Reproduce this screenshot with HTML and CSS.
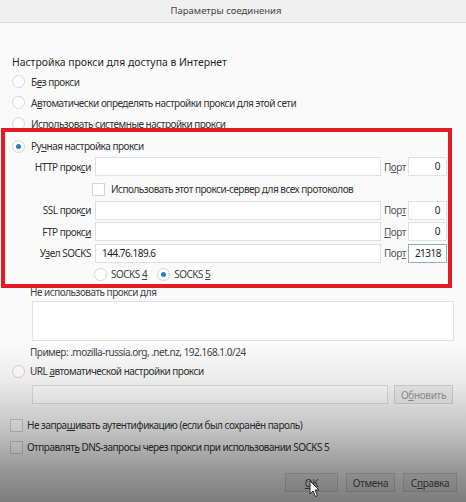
FILE: index.html
```html
<!DOCTYPE html>
<html lang="ru">
<head>
<meta charset="utf-8">
<link rel="stylesheet" href="styles.css">
</head>
<body>
<div class="dialog">
  <div class="titlebar">Параметры соединения</div>
  <div class="content">
    <div class="heading">Настройка прокси для доступа в Интернет</div>
    <label class="opt"><span class="radio"></span><span>Б<u>е</u>з прокси</span></label>
    <label class="opt"><span class="radio"></span><span>А<u>в</u>томатически определять настройки прокси для этой сети</span></label>
    <label class="opt"><span class="radio"></span><span>Испол<u>ь</u>зовать системные настройки прокси</span></label>
    <label class="opt manual"><span class="radio on"></span><span>Ру<u>ч</u>ная настройка прокси</span></label>

    <div class="proxy">
      <div class="prow">
        <span class="plabel">HTTP прок<u>с</u>и</span>
        <span class="field"></span>
        <span class="portlabel">П<u>о</u>рт</span>
        <span class="port">0</span>
      </div>
      <div class="crow">
        <span class="check"></span>
        <span>Использовать этот прокси-сервер для всех протоколов</span>
      </div>
      <div class="prow">
        <span class="plabel">SSL прок<u>с</u>и</span>
        <span class="field"></span>
        <span class="portlabel">Пор<u>т</u></span>
        <span class="port">0</span>
      </div>
      <div class="prow">
        <span class="plabel">FTP прокс<u>и</u></span>
        <span class="field"></span>
        <span class="portlabel"><u>П</u>орт</span>
        <span class="port">0</span>
      </div>
      <div class="prow">
        <span class="plabel">У<u>з</u>ел SOCKS</span>
        <span class="field">144.76.189.6</span>
        <span class="portlabel">Пор<u>т</u></span>
        <span class="port focus">21318</span>
      </div>
      <div class="srow">
        <label class="sopt"><span class="radio"></span><span>SOCKS <u>4</u></span></label>
        <label class="sopt"><span class="radio on"></span><span>SOCKS <u>5</u></span></label>
      </div>
    </div>

    <div class="noproxy">Не использовать прокси для</div>
    <div class="textarea"></div>
    <div class="example">Пример: .mozilla-russia.org, .net.nz, 192.168.1.0/24</div>
    <label class="opt url"><span class="radio"></span><span>URL <u>а</u>втоматической настройки прокси</span></label>
    <div class="urlrow">
      <span class="urlfield"></span>
      <span class="btn small">О<u>б</u>новить</span>
    </div>
    <div class="checks">
      <label class="copt"><span class="check"></span><span>Не запра<u>ш</u>ивать аутентификацию (если был сохранён пароль)</span></label>
      <label class="copt"><span class="check"></span><span>Отправлят<u>ь</u> DNS-запросы через прокси при использовании SOCKS 5</span></label>
    </div>
    <div class="buttons">
      <span class="btn ok"><u>О</u>К</span>
      <span class="btn cancel">Отмена</span>
      <span class="btn help">С<u>п</u>равка</span>
    </div>
  </div>
  <div class="redbox"></div>
  <div class="shade"></div>
  <svg class="cursor" width="12" height="18" viewBox="0 0 12 18"><path d="M1 1 L1 14 L4 11 L6.5 16.5 L8.5 15.5 L6 10 L10 10 Z" fill="#fff" stroke="#222" stroke-width="1"/></svg>
</div>
</body>
</html>
```

FILE: styles.css
```css
* { box-sizing: border-box; }
html, body { margin: 0; padding: 0; }
body {
  width: 466px;
  height: 502px;
  overflow: hidden;
  font-family: "Noto Sans", "Open Sans", sans-serif;
  font-size: 10px;
  letter-spacing: -0.5px;
  color: #2a2a2a;
  background: #fafafa;
}
u { text-decoration: underline; text-underline-offset: 1px; }
.dialog { position: relative; width: 466px; height: 502px; }
.titlebar {
  height: 23px;
  background: #f0f0f0;
  border-bottom: 1px solid #dcdcdc;
  text-align: center;
  line-height: 22px;
  padding-right: 14px;
  color: #444;
  font-size: 9.5px;
  letter-spacing: 0;
}
.content { padding: 30px 0 0 0; }
.heading { margin-left: 12px; height: 18px; line-height: 18px; font-size: 10.4px; letter-spacing: 0; color: #1e1e1e; }
.opt {
  display: flex;
  align-items: center;
  height: 21px;
  padding-left: 12px;
  gap: 6px;
  color: #333;
}
.opt.manual { margin-top: 1px; height: 22px; }
.radio {
  display: inline-block;
  width: 13px; height: 13px;
  border: 1px solid #d6d6d6;
  border-radius: 50%;
  background: #fff;
  position: relative;
  flex: none;
}
.radio.on::after {
  content: "";
  position: absolute;
  left: 3px; top: 3px;
  width: 5px; height: 5px;
  border-radius: 50%;
  background: #2a7fc4;
}
.check {
  display: inline-block;
  width: 13px; height: 13px;
  border: 1px solid #d4d4d4;
  background: #fff;
  flex: none;
}
.proxy { display: flex; flex-direction: column; }
.prow { display: flex; align-items: center; height: 19px; margin-bottom: 2.5px; }
.plabel { width: 93px; flex: none; text-align: right; padding-right: 2px; color: #333; }
.field {
  width: 286px; height: 19px;
  flex: none;
  border: 1px solid #e0e0e0;
  background: #fff;
  margin-left: 2px;
  padding-left: 6px;
  line-height: 17px;
  color: #222;
}
.portlabel { width: 27px; flex: none; padding-left: 3px; color: #555; white-space: nowrap; }
.port {
  width: 39px; height: 19px;
  flex: none;
  border: 1px solid #e0e0e0;
  background: #fff;
  text-align: right;
  padding-right: 6px;
  line-height: 17px;
  color: #222;
}
.port.focus { border-color: #8ab0c8; padding-right: 5px; }
.crow { display: flex; align-items: center; height: 21px; padding-left: 92px; gap: 6px; color: #333; margin-bottom: 1px; }
.srow { display: flex; align-items: center; height: 18px; padding-left: 94px; gap: 6px; color: #444; }
.sopt { display: flex; align-items: center; gap: 4px; }
.sopt + .sopt { margin-left: 4px; }
.noproxy { margin: 1px 0 0 30px; height: 16px; line-height: 16px; color: #444; }
.textarea {
  margin: 1px 0 0 32px;
  width: 422px; height: 40px;
  border: 1px solid #e2e2e2;
  background: #fff;
}
.example { margin: 2px 0 0 30px; height: 18px; line-height: 18px; color: #444; }
.opt.url { height: 20px; gap: 5px; }
.urlrow { display: flex; gap: 6px; margin: 4px 0 0 32px; height: 19px; }
.urlfield { width: 356px; height: 19px; border: 1px solid #e0e0e0; background: #fff; }
.btn {
  display: flex; align-items: center; justify-content: center;
  border: 1px solid #d6d6d6;
  background: #f0f0f0;
  color: #555;
  font-size: 10px;
  letter-spacing: -0.3px;
}
.btn.small { width: 59px; height: 19px; color: #999; }
.checks { margin-top: 10px; }
.copt { display: flex; align-items: center; gap: 4px; height: 22px; padding-left: 10px; color: #333; }
.buttons { display: flex; justify-content: flex-end; gap: 8px; margin-top: 15px; padding-right: 9px; }
.buttons .btn { height: 19px; }
.btn.ok { width: 53px; }
.btn.cancel { width: 49px; }
.btn.help { width: 54px; }
.redbox {
  position: absolute;
  left: 1px; top: 128px;
  width: 451px; height: 160px;
  border: 4px solid #e31b23;
  pointer-events: none;
}
.shade {
  position: absolute;
  left: 0; top: 0; right: 0; bottom: 0;
  background: linear-gradient(to bottom, rgba(0,0,0,0) 0, rgba(0,0,0,0) 345px, rgba(0,0,0,0.06) 380px, rgba(0,0,0,0.22) 430px, rgba(0,0,0,0.4) 470px, rgba(0,0,0,0.5) 502px);
  pointer-events: none;
}
.cursor { position: absolute; left: 309px; top: 480px; }
```
